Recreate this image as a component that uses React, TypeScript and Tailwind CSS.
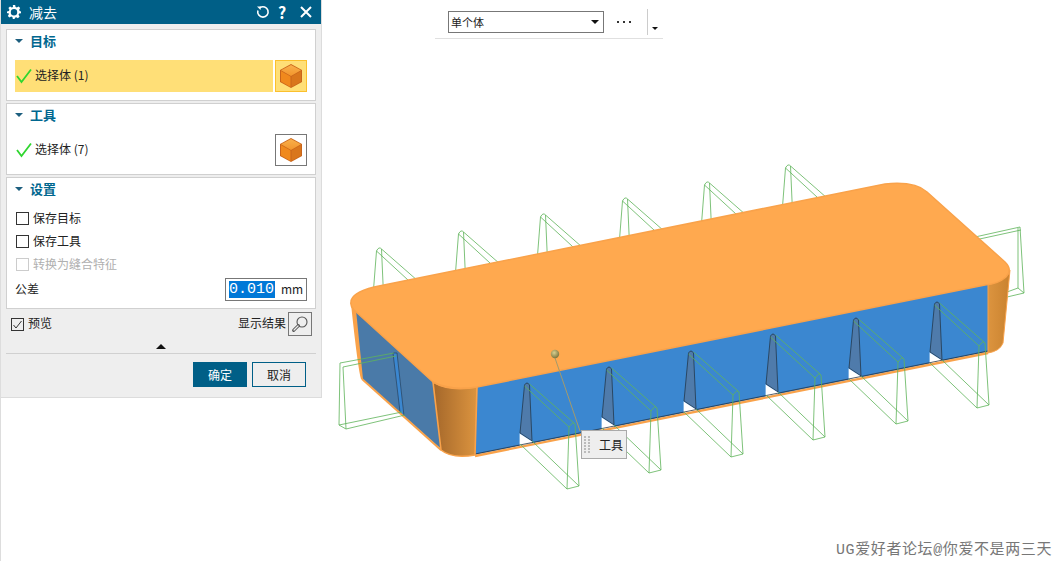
const font = { fontFamily: '"Noto Sans CJK SC", "Liberation Sans", sans-serif' };

function Cube() {
  return (
    <svg width="24" height="26" viewBox="0 0 24 26">
      <defs>
        <linearGradient id="cubeTop" x1="0" x2="0" y1="0" y2="1">
          <stop offset="0" stopColor="#f9b04c" />
          <stop offset="1" stopColor="#f2952c" />
        </linearGradient>
      </defs>
      <path d="M12 1 L23 7 L23 19 L12 25 L1 19 L1 7 Z" fill="#c9651b" />
      <path d="M12 2 L22 7.3 L12 13 L2 7.3 Z" fill="url(#cubeTop)" />
      <path d="M2 8 L11.5 13.6 L11.5 24 L2 18.6 Z" fill="#f0891d" />
      <path d="M22 8 L12.5 13.6 L12.5 24 L22 18.6 Z" fill="#d9761c" />
    </svg>
  );
}

function Caret() {
  return <span className="w-0 h-0 border-l-[4px] border-r-[4px] border-t-[4px] border-l-transparent border-r-transparent border-t-[#1d5f7f]" />;
}

function SectionTitle({ label }: { label: string }) {
  return (
    <div className="flex items-center h-[22px] pl-[8px] gap-[7px]">
      <Caret />
      <span className="text-[13px] font-bold text-[#00678f]">{label}</span>
    </div>
  );
}

function Check({ label, disabled }: { label: string; disabled?: boolean }) {
  return (
    <div className="flex items-center h-[23px] pl-[9px] gap-[4px]">
      <span className={`w-[13px] h-[13px] border ${disabled ? 'border-[#ccc]' : 'border-[#333]'}`} />
      <span className={`text-[12px] mb-[2px] ${disabled ? 'text-[#b0b0b0]' : 'text-[#222]'}`}>{label}</span>
    </div>
  );
}

function SelectRow({ count, active }: { count: number; active?: boolean }) {
  return (
    <div className="flex items-center mt-[8px] ml-[8px] mr-[8px] h-[32px] gap-[2px]">
      <div className={`flex-1 h-full flex items-center gap-[3px] pl-[1px] ${active ? 'bg-[#ffdf77]' : ''}`}>
        <svg width="16" height="16" viewBox="0 0 16 16">
          <path d="M1 8 L5.5 14 L15 1.5" fill="none" stroke="#2fd62f" strokeWidth="1.8" />
        </svg>
        <span className="text-[12px] mb-[2px] text-[#222]">选择体 ({count})</span>
      </div>
      <div className={`w-[32px] h-[32px] flex items-center justify-center border ${active ? 'bg-[#ffdf77] border-[#fbc02d]' : 'border-[#777]'}`}>
        <Cube />
      </div>
    </div>
  );
}

function Panel() {
  return (
    <div className="w-[322px] h-[398px] shrink-0 bg-[#eeeeee] border-r border-b border-[#dcdcdc] flex flex-col">
      <div className="h-[24px] bg-[#005f87] flex items-center text-white pl-[7px] pr-[9px]">
        <svg width="14" height="14" viewBox="0 0 24 24">
          <path fill="#fff" fillRule="evenodd" d="M10 0h4l.7 3.3 2.2.9L19.8 2.4l2.8 2.8-1.8 2.9.9 2.2L24 11v3l-3.3.7-.9 2.2 1.8 2.9-2.8 2.8-2.9-1.8-2.2.9L13 24h-3l-.7-3.3-2.2-.9-2.9 1.8-2.8-2.8 1.8-2.9-.9-2.2L0 14v-3l3.3-.7.9-2.2-1.8-2.9 2.8-2.8 2.9 1.8 2.2-.9zM12 7a5.5 5.5 0 1 0 0 11 5.5 5.5 0 0 0 0-11z" />
        </svg>
        <span className="ml-[8px] text-[14px] flex-1">减去</span>
        <svg width="14" height="14" viewBox="0 0 14 14" className="mr-[6px]">
          <path d="M4 2.6 A5.2 5.2 0 1 1 1.9 5.5" fill="none" stroke="#fff" strokeWidth="1.6" />
          <path d="M1 1.5 L5 1.5 L4.5 5 Z" fill="#fff" />
        </svg>
        <span className="text-[16px] font-bold w-[12px] text-center mr-[12px]">?</span>
        <svg width="12" height="12" viewBox="0 0 12 12">
          <path d="M1 1 L11 11 M11 1 L1 11" stroke="#fff" strokeWidth="2" />
        </svg>
      </div>

      <div className="flex flex-col gap-[2px] mt-[5px] ml-[6px] mr-[5px]">
        <div className="h-[72px] bg-white border border-[#d0d0d0]">
          <SectionTitle label="目标" />
          <SelectRow count={1} active />
        </div>
        <div className="h-[72px] bg-white border border-[#d0d0d0]">
          <SectionTitle label="工具" />
          <SelectRow count={7} />
        </div>
        <div className="h-[132px] bg-white border border-[#d0d0d0]">
          <SectionTitle label="设置" />
          <div className="mt-[7px]">
            <Check label="保存目标" />
            <Check label="保存工具" />
            <Check label="转换为缝合特征" disabled />
          </div>
          <div className="flex items-center justify-between pl-[8px] pr-[8px] mt-[1px] h-[24px]">
            <span className="text-[12px] text-[#222]">公差</span>
            <div className="w-[82px] h-[23px] border border-[#777] flex items-center pl-[3px]">
              <span className="bg-[#0078d7] text-white text-[15px] leading-[17px] w-[46px]" style={{ fontFamily: '"Liberation Mono", monospace' }}>0.010</span>
              <span className="ml-[6px] text-[12px] text-[#222]">mm</span>
            </div>
          </div>
        </div>
      </div>

      <div className="flex items-center justify-between h-[24px] mt-[3px] pl-[11px] pr-[9px]">
        <div className="flex items-center gap-[4px]">
          <span className="w-[13px] h-[13px] border border-[#333] flex items-center justify-center">
            <svg width="11" height="11" viewBox="0 0 11 11"><path d="M1.5 6 L4 9 L9.5 2" fill="none" stroke="#333" strokeWidth="1" /></svg>
          </span>
          <span className="text-[12px] mb-[2px] text-[#222]">预览</span>
        </div>
        <div className="flex items-center gap-[2px]">
          <span className="text-[12px] mb-[2px] text-[#222]">显示结果</span>
          <div className="w-[24px] h-[24px] border border-[#777] flex items-center justify-center">
            <svg width="18" height="18" viewBox="0 0 18 18">
              <circle cx="11" cy="7" r="5" fill="none" stroke="#555" strokeWidth="1.1" />
              <path d="M7.4 10.6 L2.6 15.4" stroke="#555" strokeWidth="3" strokeLinecap="round" />
              <path d="M7 11 L3 15" stroke="#eeeeee" strokeWidth="1.2" strokeLinecap="round" />
            </svg>
          </div>
        </div>
      </div>

      <div className="flex justify-center mt-[8px] mb-[4px]">
        <span className="w-0 h-0 border-l-[5px] border-r-[5px] border-b-[5px] border-l-transparent border-r-transparent border-b-[#111]" />
      </div>
      <div className="h-px bg-[#d0d0d0] ml-[6px] mr-[5px]" />
      <div className="flex justify-end gap-[5px] mt-[8px] pr-[15px]">
        <button className="w-[54px] h-[25px] bg-[#005f87] text-white text-[12px]">确定</button>
        <button className="w-[54px] h-[25px] border border-[#005f87] text-[#222] text-[12px]">取消</button>
      </div>
    </div>
  );
}

function Toolbar() {
  return (
    <div className="ml-[113px] w-[228px] h-[39px] border-b border-[#e0e0e0] flex items-start">
      <div className="ml-[13px] mt-[11px] w-[156px] h-[22px] border border-[#777] flex items-center pl-[2px] pr-[4px] justify-between">
        <span className="text-[11px] text-[#222]">单个体</span>
        <span className="w-0 h-0 border-l-[4px] border-r-[4px] border-t-[4px] border-l-transparent border-r-transparent border-t-[#111]" />
      </div>
      <div className="ml-[13px] mt-[21px] flex gap-[4px]">
        <span className="w-[2px] h-[2px] bg-[#333]" />
        <span className="w-[2px] h-[2px] bg-[#333]" />
        <span className="w-[2px] h-[2px] bg-[#333]" />
      </div>
      <div className="ml-[16px] mt-[9px] w-px h-[26px] bg-[#ccc]" />
      <span className="ml-[4px] mt-[27px] w-0 h-0 border-l-[3px] border-r-[3px] border-t-[3px] border-l-transparent border-r-transparent border-t-[#111]" />
    </div>
  );
}

// fin wireframe, tx/ty = top of the rib. posts are hidden inside the notch on the front side
function Fin({ tx, ty, posts }: { tx: number; ty: number; posts?: boolean }) {
  const p = (dx: number, dy: number) => `${tx + dx} ${ty + dy}`;
  return (
    <g fill="none" strokeWidth="0.9" stroke="#5fb35a" strokeOpacity="0.9">
      {posts && <path d={`M${p(-2.5, 3)} Q${p(0, -2)} ${p(2.5, 1)} L${p(5, 58)} M${p(-2.5, 3)} L${p(-7, 61)}`} />}
      <path d={`M${p(-2.5, 3)} L${p(42, 44)} M${p(2.5, 1)} L${p(47, 40)}`} />
      <path d={`M${p(42, 44)} L${p(40, 106)} L${p(52, 103)} L${p(48, 41)} Q${p(46, 38)} ${p(42, 44)}`} />
      <path d={`M${p(-7, 61)} L${p(40, 106)} M${p(5, 58)} L${p(52, 103)}`} />
    </g>
  );
}

const backFins = [[379, 248], [461, 231], [543, 214], [625, 198], [707, 182], [788, 165]];
const frontFins = [[527, 383], [609, 367], [691, 351], [773, 334], [856, 318], [937, 302]];

function Model() {
  return (
    <svg className="absolute left-0 top-0 pointer-events-none" width="1055" height="561" viewBox="0 0 1055 561">
      <defs>
        <linearGradient id="corner" x1="0" x2="1" y1="0" y2="0">
          <stop offset="0" stopColor="#a4672a" />
          <stop offset="1" stopColor="#dc943f" />
        </linearGradient>
        <linearGradient id="cornerR" x1="0" x2="1" y1="0" y2="0">
          <stop offset="0" stopColor="#dc943f" />
          <stop offset="1" stopColor="#c9822f" />
        </linearGradient>
        <radialGradient id="ball" cx="0.4" cy="0.35" r="0.7">
          <stop offset="0" stopColor="#d8cf8f" />
          <stop offset="1" stopColor="#76703a" />
        </radialGradient>
      </defs>

      {backFins.map(([x, y]) => <Fin key={x} tx={x} ty={y} posts />)}
      <g fill="none" stroke="#5fb35a" strokeWidth="0.9" strokeOpacity="0.9">
        <path d="M975 237 L1020 227 L1024 293 L1007 297 M975 240 L1021 230 M1018 228 L1018 288 L1024 293 M1018 288 L1007 292" />
      </g>

      {/* left face */}
      <path d="M355 310 L433 382 L441 449 L362 379 Z" fill="#4a7aa8" />
      <path d="M393 353 L397 353 L404 416 L400 412 Z" fill="#3b87d0" stroke="#23384d" strokeWidth="0.6" />
      <path d="M352 304 L355 310 L362 379 Q359 370 352 304 Z" fill="#f9a24a" stroke="#f9a24a" strokeWidth="2" />
      <path d="M362 379 L441 450" stroke="#f9a24a" strokeWidth="2" />

      {/* front face */}
      <path d="M477 386 L988 283 L988 352 L475 455 Z" fill="#3b87d0" />
      {frontFins.map(([x, y]) => (
        <g key={x}>
          <path d={`M${x - 7} ${y + 50} L${x - 2.5} ${y + 2} Q${x} ${y - 2} ${x + 2.5} ${y + 2} L${x + 5} ${y + 58} Z`} fill="#4f7bab" stroke="#23384d" strokeWidth="0.8" />
          <path d={`M${x - 7.4} ${y + 50.5} L${x + 5} ${y + 58.5} L${x + 5} ${y + 60} L${x - 7.4} ${y + 63} Z`} fill="#ffffff" />
        </g>
      ))}
      <path d="M475 454 L988 351" stroke="#2a3440" strokeWidth="0.8" />
      <path d="M475 456 L988 353" stroke="#f9a24a" strokeWidth="2.4" />

      {/* corners */}
      <path d="M433 382 Q450 392 477 387 L475 455 Q452 459 441 450 Z" fill="url(#corner)" stroke="#f9a24a" strokeWidth="1.6" />
      <path d="M988 284 Q1000 282 1010 270 L1003 343 Q1000 351 988 353 Z" fill="url(#cornerR)" stroke="#f9a24a" strokeWidth="1" />

      {/* top face */}
      <path d="M351 302 Q351 293 374 287 L885 184 Q915 181 927 192 L1005 262 Q1013 270 1006 277 Q998 284 985 285 L477 387 Q450 391 433 382 L354 310 Q350 306 351 302 Z" fill="#ffa94f" stroke="#f9a24a" strokeWidth="1.5" />

      {frontFins.map(([x, y]) => <Fin key={x} tx={x} ty={y} />)}
      <g fill="none" stroke="#5fb35a" strokeWidth="0.9" strokeOpacity="0.9">
        <path d="M394 353 L340 363 L339 425 L346 429 L405 415 M396 356 L343 367 L346 429 M339 425 L402 412" />
      </g>

      <path d="M555 358 L580 431" stroke="#a39a6c" strokeWidth="1" />
      <circle cx="555" cy="354" r="4.2" fill="url(#ball)" />
    </svg>
  );
}

export default function App() {
  return (
    <div className="relative w-[1055px] h-[561px] bg-white overflow-hidden flex items-start" style={font}>
      <div className="absolute left-0 top-0 w-px h-[561px] bg-[#dddddd]" />
      <Panel />
      <div className="flex-1 relative">
        <Toolbar />
      </div>
      <Model />
      <div className="absolute left-[581px] top-[430px] w-[46px] h-[29px] bg-[#eeeeee] border border-[#aaaaaa] flex items-center pl-[2px]">
        <div className="grid grid-cols-2 gap-x-[2px] gap-y-[1px]">
          {Array.from({ length: 12 }).map((_, i) => (
            <span key={i} className="w-[2px] h-[2px] bg-[#bbbbbb]" />
          ))}
        </div>
        <span className="ml-[9px] text-[12px] text-[#222]">工具</span>
      </div>
      <div className="absolute left-[836px] top-[540px] text-[15px] tracking-[0.6px] text-[#777] whitespace-nowrap" style={{ fontFamily: '"Liberation Mono", "Noto Sans CJK SC", monospace' }}>
        UG爱好者论坛@你爱不是两三天
      </div>
    </div>
  );
}
